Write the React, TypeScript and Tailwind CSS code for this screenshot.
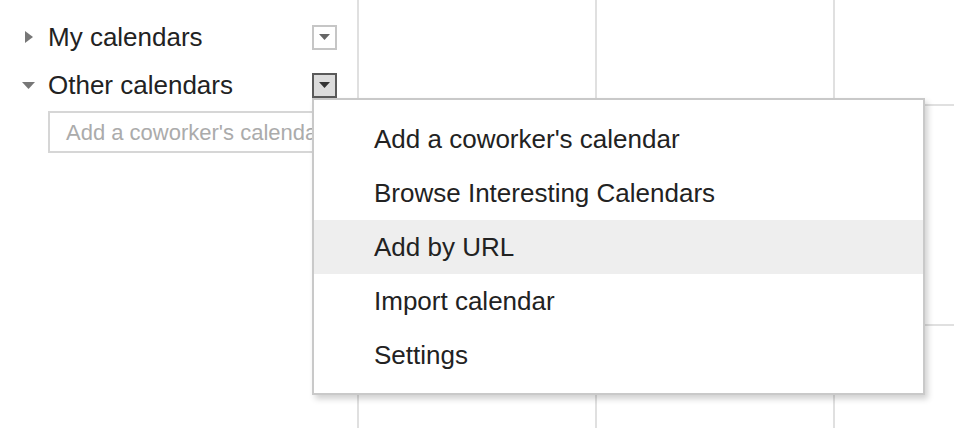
const menuItems = [
  "Add a coworker's calendar",
  "Browse Interesting Calendars",
  "Add by URL",
  "Import calendar",
  "Settings",
];

function Caret({ open }: { open: boolean }) {
  if (open) {
    return (
      <svg width="13" height="7" viewBox="0 0 13 7" className="ml-[22px] mr-[13px]">
        <polygon points="0,0 13,0 6.5,7" fill="#777" />
      </svg>
    );
  }
  return (
    <svg width="8" height="12" viewBox="0 0 8 12" className="ml-[25px] mr-[15px]">
      <polygon points="0,0 8,6 0,12" fill="#777" />
    </svg>
  );
}

function SectionRow({ label, open, active }: { label: string; open: boolean; active?: boolean }) {
  return (
    <div className="flex h-[48px] items-center">
      <Caret open={open} />
      <span className="flex-1 text-[26px] leading-none">{label}</span>
      <button
        className={`flex h-[25px] w-[25px] items-center justify-center border-2 ${
          active ? "border-[#5a5a5a] bg-[#dcdcdc]" : "border-[#c6c6c6] bg-white"
        }`}
      >
        <svg width="11" height="6" viewBox="0 0 11 6">
          <polygon points="0,0 11,0 5.5,6" fill={active ? "#333" : "#666"} />
        </svg>
      </button>
    </div>
  );
}

function GridRow({ height, last }: { height: string; last?: boolean }) {
  return (
    <div className={`flex ${height} ${last ? "" : "border-b-2 border-[#e0e0e0]"}`}>
      <div className="w-[238px] shrink-0 border-l-2 border-[#e0e0e0]" />
      <div className="w-[238px] shrink-0 border-l-2 border-[#e0e0e0]" />
      <div className="w-[238px] shrink-0 border-l-2 border-[#e0e0e0]" />
    </div>
  );
}

export default function App() {
  return (
    <div className="relative flex h-[428px] w-[954px] overflow-hidden bg-white font-['Liberation_Sans',Arial,sans-serif] text-[#222]">
      <aside className="w-[357px] shrink-0 pt-[13px] pr-[20px]">
        <SectionRow label="My calendars" open={false} />
        <SectionRow label="Other calendars" open active />
        <div className="ml-[48px] mt-[2px] flex h-[42px] items-center overflow-hidden whitespace-nowrap border-2 border-[#d6d6d6] pl-[16px] text-[22px] text-[#ababab]">
          Add a coworker's calendar
        </div>
      </aside>

      <div className="flex flex-1 flex-col">
        <GridRow height="h-[106px]" />
        <GridRow height="h-[220px]" />
        <GridRow height="flex-1" last />
      </div>

      <div className="absolute left-[312px] top-[98px] h-[297px] w-[613px] border-2 border-[#c9c9c9] bg-white pt-[12px] shadow-[3px_4px_6px_rgba(0,0,0,0.18)]">
        {menuItems.map((item) => (
          <div
            key={item}
            className={`flex h-[54px] items-center pl-[60px] text-[26px] leading-none text-[#222] ${
              item === "Add by URL" ? "bg-[#eeeeee]" : ""
            }`}
          >
            {item}
          </div>
        ))}
      </div>
    </div>
  );
}
